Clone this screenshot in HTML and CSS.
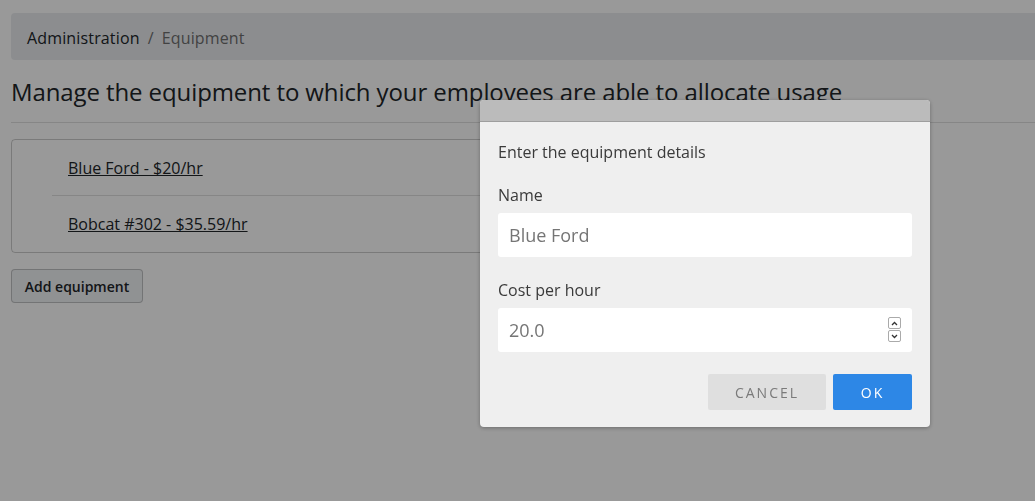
FILE: index.html
```html
<!DOCTYPE html>
<html>
<head>
<meta charset="utf-8">
<link rel="stylesheet" href="styles.css">
</head>
<body>
<div class="page">
  <nav class="breadcrumb">
    <span class="crumb">Administration</span>
    <span class="sep">/</span>
    <span class="crumb active">Equipment</span>
  </nav>
  <h1 class="title">Manage the equipment to which your employees are able to allocate usage</h1>
  <hr class="rule">
  <ul class="list">
    <li class="item"><a href="#">Blue Ford - $20/hr</a></li>
    <li class="item"><a href="#">Bobcat #302 - $35.59/hr</a></li>
  </ul>
  <button class="add-btn">Add equipment</button>
</div>
<div class="overlay"></div>
<div class="modal">
  <div class="modal-head"></div>
  <div class="modal-body">
    <p class="intro">Enter the equipment details</p>
    <label class="label">Name</label>
    <div class="field"><span class="placeholder">Blue Ford</span></div>
    <label class="label">Cost per hour</label>
    <div class="field">
      <span class="placeholder">20.0</span>
      <span class="spin">
        <span class="spin-btn"><svg width="7" height="5" viewBox="0 0 7 5"><path d="M1 4 L3.5 1.5 L6 4" fill="none" stroke="#333" stroke-width="1.3"/></svg></span>
        <span class="spin-btn"><svg width="7" height="5" viewBox="0 0 7 5"><path d="M1 1 L3.5 3.5 L6 1" fill="none" stroke="#333" stroke-width="1.3"/></svg></span>
      </span>
    </div>
    <div class="actions">
      <button class="btn cancel">CANCEL</button>
      <button class="btn ok">OK</button>
    </div>
  </div>
</div>
</body>
</html>
```

FILE: styles.css
```css
html, body {
  margin: 0;
  padding: 0;
  background: #fff;
  font-family: "Open Sans", "Noto Sans", sans-serif;
  color: #212529;
  overflow: hidden;
  width: 1035px;
  height: 501px;
}
.page {
  padding: 13px 0 0 11px;
}
.breadcrumb {
  background: #e9ecef;
  border-radius: 4px 0 0 4px;
  height: 47px;
  display: flex;
  align-items: center;
  padding: 2px 0 0 16px;
  box-sizing: border-box;
  font-size: 16px;
  letter-spacing: 0.15px;
  gap: 8px;
}
.crumb { color: #212529; }
.crumb.active { color: #6f6f6f; }
.sep { color: #6f6f6f; }
.title {
  font-weight: 400;
  font-size: 24px;
  margin: 17px 0 0 0;
  line-height: 29px;
  letter-spacing: -0.1px;
}
.rule {
  border: 0;
  border-top: 1px solid rgba(0,0,0,0.12);
  margin: 16px 0 16px 0;
}
.list {
  list-style: none;
  margin: 0;
  padding: 0 0 1px 40px;
  width: 840px;
  border: 1px solid rgba(0,0,0,0.2);
  border-radius: 4px;
}
.item {
  height: 55px;
  display: flex;
  align-items: center;
  padding-left: 16px;
  font-size: 16px;
}
.item + .item { border-top: 1px solid rgba(0,0,0,0.12); }
.item a { color: #212529; }
.add-btn {
  margin-top: 16px;
  height: 34px;
  width: 132px;
  font-family: inherit;
  font-size: 14px;
  font-weight: 600;
  color: #212529;
  background: #f1f3f5;
  border: 1px solid rgba(0,0,0,0.2);
  border-radius: 4px;
}
.overlay {
  position: fixed;
  inset: 0;
  background: rgba(0,0,0,0.4);
}
.modal {
  position: fixed;
  left: 480px;
  top: 100px;
  width: 450px;
  background: #efefef;
  border-radius: 4px;
  box-shadow: 0 1px 4px rgba(0,0,0,0.3);
  overflow: hidden;
}
.modal-head {
  height: 21px;
  background: #bbbbbb;
  border-bottom: 1px solid #9e9e9e;
}
.modal-body {
  padding: 16px 18px 17px 18px;
  display: flex;
  flex-direction: column;
}
.intro {
  margin: 0;
  font-size: 16px;
  line-height: 28px;
  color: #3a3a3a;
}
.label {
  font-size: 16px;
  color: #3a3a3a;
  line-height: 22px;
  margin-top: 18px;
  margin-bottom: 7px;
}
.field + .label { margin-top: 22px; }
.field {
  height: 44px;
  background: #fff;
  border-radius: 3px;
  display: flex;
  align-items: center;
  padding: 0 11px;
  font-size: 18px;
  color: #757575;
  justify-content: space-between;
}
.spin {
  display: flex;
  flex-direction: column;
  margin-right: 0;
}
.spin-btn {
  width: 11px;
  height: 10px;
  border: 1px solid #aaa;
  border-radius: 2px;
  display: flex;
  align-items: center;
  justify-content: center;
  margin-bottom: 1px;
  background: #fff;
}
.actions {
  display: flex;
  justify-content: flex-end;
  gap: 7px;
  margin-top: 22px;
}
.btn {
  height: 36px;
  border: 0;
  border-radius: 2px;
  font-family: inherit;
  font-size: 14px;
  letter-spacing: 2px;
}
.cancel {
  width: 118px;
  background: #dfdfdf;
  color: #7a7a7a;
}
.ok {
  width: 79px;
  background: #2d87e6;
  color: #fff;
}
```
